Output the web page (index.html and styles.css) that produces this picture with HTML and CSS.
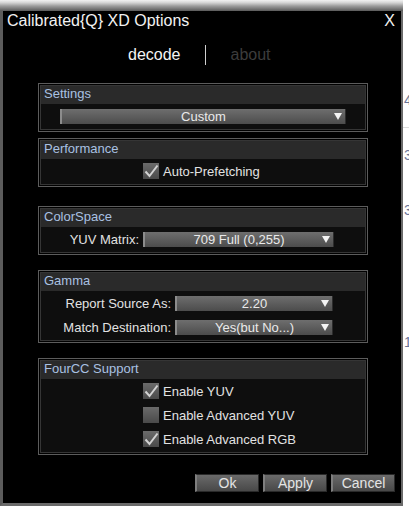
FILE: index.html
```html
<!DOCTYPE html>
<html>
<head>
<meta charset="utf-8">
<link rel="stylesheet" href="styles.css">
</head>
<body>
<div class="window">
  <div class="topbar"></div>
  <div class="frame">
    <div class="titlebar"><span class="title">Calibrated{Q} XD Options</span><span class="close">X</span></div>
    <div class="tabs">
      <span class="tab tab-active">decode</span>
      <span class="tab-divider"></span>
      <span class="tab">about</span>
    </div>
    <div class="groups">
      <div class="group">
        <div class="inner">
          <div class="head">Settings</div>
          <div class="body">
            <div class="row row-settings">
              <div class="dropdown dd-settings"><span class="dd-text">Custom</span><span class="arrow"></span></div>
            </div>
          </div>
        </div>
      </div>
      <div class="group mt6">
        <div class="inner">
          <div class="head">Performance</div>
          <div class="body">
            <div class="row row-check">
              <span class="cb"><svg width="16" height="16" viewBox="0 0 16 16"><path d="M2.5 8.5 L6.5 13 L14.5 2.5" fill="none" stroke="#d2d2d2" stroke-width="2"/></svg></span>
              <span class="cb-label">Auto-Prefetching</span>
            </div>
          </div>
        </div>
      </div>
      <div class="group mt19">
        <div class="inner">
          <div class="head">ColorSpace</div>
          <div class="body">
            <div class="row row-field pr31">
              <span class="field-label">YUV Matrix:</span>
              <div class="dropdown dd-color"><span class="dd-text">709 Full (0,255)</span><span class="arrow"></span></div>
            </div>
          </div>
        </div>
      </div>
      <div class="group mt15">
        <div class="inner">
          <div class="head">Gamma</div>
          <div class="body">
            <div class="row row-field pr32">
              <span class="field-label">Report Source As:</span>
              <div class="dropdown dd-gamma"><span class="dd-text">2.20</span><span class="arrow"></span></div>
            </div>
            <div class="row row-field pr32">
              <span class="field-label">Match Destination:</span>
              <div class="dropdown dd-gamma"><span class="dd-text">Yes(but No...)</span><span class="arrow"></span></div>
            </div>
          </div>
        </div>
      </div>
      <div class="group mt15">
        <div class="inner">
          <div class="head">FourCC Support</div>
          <div class="body">
            <div class="row row-check">
              <span class="cb"><svg width="16" height="16" viewBox="0 0 16 16"><path d="M2.5 8.5 L6.5 13 L14.5 2.5" fill="none" stroke="#d2d2d2" stroke-width="2"/></svg></span>
              <span class="cb-label">Enable YUV</span>
            </div>
            <div class="row row-check">
              <span class="cb"></span>
              <span class="cb-label">Enable Advanced YUV</span>
            </div>
            <div class="row row-check">
              <span class="cb"><svg width="16" height="16" viewBox="0 0 16 16"><path d="M2.5 8.5 L6.5 13 L14.5 2.5" fill="none" stroke="#d2d2d2" stroke-width="2"/></svg></span>
              <span class="cb-label">Enable Advanced RGB</span>
            </div>
          </div>
        </div>
      </div>
    </div>
    <div class="buttons">
      <button class="btn">Ok</button>
      <button class="btn">Apply</button>
      <button class="btn">Cancel</button>
    </div>
  </div>
</div>
<span class="bg-num n1">4</span>
<span class="bg-num n2">3</span>
<span class="bg-num n3">3</span>
<span class="bg-num n4">1</span>
<span class="bg-line"></span>
</body>
</html>
```
FILE: styles.css
```css
html, body {
  margin: 0;
  padding: 0;
}
body {
  width: 409px;
  height: 507px;
  background: #ffffff;
  font-family: "Liberation Sans", Arial, sans-serif;
  position: relative;
  overflow: hidden;
}
.window {
  width: 403px;
}
.topbar {
  height: 11px;
  background: linear-gradient(#f2f2f2 0%, #d4d4d4 25%, #9c9c9c 55%, #5a5a5a 100%);
}
.frame {
  background: #000;
  border-left: 3px solid #5c5c5c;
  border-right: 2px solid #6a6a6a;
  border-bottom: 3px solid #6a6a6a;
  padding-bottom: 11px;
}
.titlebar {
  display: flex;
  justify-content: space-between;
  height: 19px;
  line-height: 19px;
  padding: 0 6px 0 4px;
  color: #f2f2f2;
  font-size: 16px;
}
.tabs {
  display: flex;
  align-items: center;
  margin-top: 15px;
  height: 20px;
  line-height: 20px;
  padding-left: 125px;
  font-size: 16px;
}
.tab {
  color: #3c3c3c;
}
.tab-active {
  color: #f4f4f4;
}
.tab-divider {
  width: 1px;
  height: 20px;
  background: #cfcfcf;
  margin: 0 25px 0 24px;
}
.groups {
  margin: 18px 0 0 35px;
  width: 330px;
}
.group {
  border: 1px solid #5c5c5c;
  padding: 1px;
  background: #000;
}
.mt6 { margin-top: 6px; }
.mt15 { margin-top: 15px; }
.mt19 { margin-top: 19px; }
.inner {
  border: 1px solid #353535;
}
.head {
  height: 18px;
  line-height: 16px;
  background: #2a2a2a;
  color: #a9c1e2;
  font-size: 13px;
  padding-left: 3px;
}
.body {
  background: #0e0e0e;
  padding-bottom: 1px;
}
.row {
  height: 24px;
  display: flex;
  align-items: center;
  font-size: 13px;
  color: #e2e2e2;
}
.row-settings {
  padding-left: 19px;
}
.row-check {
  padding-left: 102px;
}
.row-field {
  justify-content: flex-end;
}
.pr31 { padding-right: 31px; }
.pr32 { padding-right: 32px; }
.field-label {
  margin-right: 4px;
}
.dropdown {
  position: relative;
  height: 15px;
  box-sizing: border-box;
  display: flex;
  align-items: center;
  background: linear-gradient(#6e6e6e, #4c4c4c);
  border-left: 2px solid #8c8c8c;
  border-right: 1px solid #2c2c2c;
  color: #eaeaea;
  font-size: 13px;
  line-height: 15px;
}
.dd-settings { width: 286px; }
.dd-color { width: 191px; }
.dd-gamma { width: 158px; }
.dd-text {
  flex: 1;
  text-align: center;
}
.arrow {
  position: absolute;
  right: 3px;
  top: 4px;
  width: 0;
  height: 0;
  border-left: 4px solid transparent;
  border-right: 4px solid transparent;
  border-top: 7px solid #f4f4f4;
}
.cb {
  width: 16px;
  height: 16px;
  background: linear-gradient(#6a6a6a, #4a4a4a);
  display: block;
  flex: none;
}
.cb svg {
  display: block;
}
.cb-label {
  margin-left: 4px;
}
.buttons {
  display: flex;
  justify-content: flex-end;
  gap: 4px;
  margin-top: 19px;
  padding-right: 6px;
}
.btn {
  width: 64px;
  height: 18px;
  box-sizing: border-box;
  padding: 0;
  margin: 0;
  background: linear-gradient(#6a6a6a, #484848);
  border: 1px solid #2a2a2a;
  border-left: 2px solid #7e7e7e;
  color: #e4e4e4;
  font-family: "Liberation Sans", Arial, sans-serif;
  font-size: 14px;
  line-height: 16px;
  text-align: center;
}
.bg-num {
  position: absolute;
  left: 404px;
  font-size: 14px;
  line-height: 14px;
  color: #6b7598;
}
.n1 { top: 93px; }
.n2 { top: 148px; }
.n3 { top: 203px; }
.n4 { top: 335px; }
.bg-line {
  position: absolute;
  left: 403px;
  top: 127px;
  width: 6px;
  height: 1px;
  background: #dcdcdc;
}
```
